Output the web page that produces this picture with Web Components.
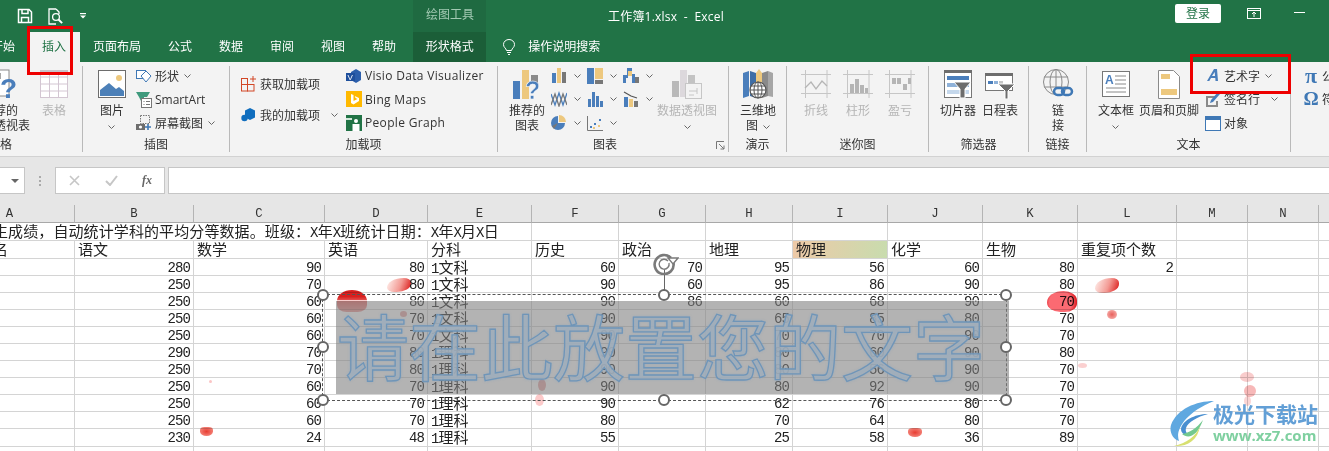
<!DOCTYPE html>
<html lang="zh">
<head>
<meta charset="utf-8">
<title>工作簿1.xlsx - Excel</title>
<style>
  html, body { margin: 0; width: 1329px; height: 451px; overflow: hidden; background: #fff; }
  body { font: 12px "Open Sans", "Noto Sans CJK SC", sans-serif; color: #333; }
  svg { display: block; }
</style>
</head>
<body>

<x-titlebar>
  <svg slot="qat" style="margin-left:17px" width="16" height="16" fill="none" stroke="#fff" stroke-width="1.5"><path d="M1.5 1.5h10.5l2.5 2.5v10.5h-13z"/><path d="M5 1.5v4h6v-4M4.5 14.5v-5h7v5"/></svg>
  <svg slot="qat" style="margin-left:14px" width="16" height="17" fill="none" stroke="#fff" stroke-width="1.3"><path d="M9 1h-7v15h7M9 1l3 3v2"/><circle cx="9" cy="9" r="3.4"/><path d="M11.5 11.5l3.6 3.6" stroke-width="2"/></svg>
  <svg slot="qat" style="margin-left:17px" width="6" height="6" fill="#fff"><rect width="6" height="1.2"/><path d="M0 2.6h6l-3 3z"/></svg>
</x-titlebar>
<x-tabs></x-tabs>

<x-ribbon>
  <x-group label="表格" style="width:165px">
    <x-big style="width:62px;margin-left:51px">
      <svg slot="icon" width="32" height="32" fill="none"><rect x="1" y="2" width="24" height="26" fill="#fff" stroke="#8a8a8a"/><rect x="3" y="5" width="14" height="6" fill="#a6a6a6"/><text x="16" y="30" font-size="28" font-weight="700" fill="#4a7ebb" font-family="Liberation Sans">?</text></svg>
      推荐的<br>数据透视表
    </x-big>
    <x-big disabled style="width:40px;margin-left:3px">
      <svg slot="icon" width="28" height="28" fill="#fff" stroke="#d3c6d2"><rect x=".5" y=".5" width="27" height="27"/><path d="M.5 7h27M.5 14h27M.5 21h27M9.5 0v28M18.5 0v28"/><rect x="0" y="0" width="28" height="4" fill="#c9c1c8" stroke="none"/></svg>
      表格
    </x-big>
  </x-group>

  <x-group label="插图" style="width:147px;padding-left:11px">
    <x-big style="width:36px">
      <svg slot="icon" width="28" height="28"><rect x=".5" y=".5" width="27" height="27" fill="#fff" stroke="#6d6d6d"/><circle cx="21" cy="8" r="3" fill="#edc87e"/><path d="M2 26v-6l9-7 7 6 3-2 5 4v5z" fill="#4c80b8"/></svg>
      图片<br><x-chev style="margin:0"></x-chev>
    </x-big>
    <x-col style="margin-left:6px">
      <x-small><svg slot="icon" width="16" height="15" fill="#fff" stroke="#3f78b5"><rect x=".5" y="2.5" width="9" height="8"/><path d="M10 3l5 5-5 6-5-6z"/></svg>形状<x-chev></x-chev></x-small>
      <x-small><svg slot="icon" width="16" height="17"><path d="M0 1h14l-3 5H3z" fill="#3f9a7d"/><path d="M3 6h5v4H5z" fill="#3f9a7d"/><rect x="5.500" y="7.500" width="10" height="9" fill="#fff" stroke="#777"/><path d="M7.500 10.500h1M7.500 13.500h1M10 10.500h4M10 13.500h4" stroke="#777"/></svg>SmartArt</x-small>
      <x-small><svg slot="icon" width="16" height="16"><rect x="4.500" y=".5" width="9" height="8" fill="none" stroke="#777" stroke-dasharray="1.500 1"/><rect x="0" y="9" width="9" height="6" fill="#6d6d6d"/><circle cx="4.500" cy="12" r="1.600" fill="#fff"/><path d="M12 9v6M9 12h6" stroke="#3f78b5" stroke-width="1.600"/></svg>屏幕截图<x-chev></x-chev></x-small>
    </x-col>
  </x-group>

  <x-group label="加载项" style="width:268px;padding-left:11px">
    <x-col style="width:105px;--row:31px;margin-top:2.500px">
      <x-small><svg slot="icon" width="16" height="16" fill="none" stroke="#d24726"><rect x=".5" y="2.500" width="6" height="6"/><rect x="6.500" y="8.500" width="6.500" height="6.500"/><rect x=".5" y="8.500" width="6" height="6.500"/><path d="M12 0v6M9 3h6"/></svg>获取加载项</x-small>
      <x-small><svg slot="icon" width="16" height="16"><path d="M9 1l5 2.500v7L9 13l-5-2.500v-7z" fill="#106ebe"/><circle cx="3.500" cy="11" r="3.200" fill="#106ebe"/></svg>我的加载项<x-chev style="margin-left:11px"></x-chev></x-small>
    </x-col>
    <x-col style="letter-spacing:.32px">
      <x-small><svg slot="icon" width="16" height="16"><path d="M10 1l5 3v8l-5 3-5-3V4z" fill="#2b5eab"/><rect x="0" y="5" width="9" height="8" fill="#1e4f9c"/><text x="1.500" y="12" font-size="8" fill="#fff" font-family="Liberation Sans">V</text></svg>Visio Data Visualizer</x-small>
      <x-small><svg slot="icon" width="16" height="16"><rect width="16" height="16" fill="#ffb900"/><path d="M5 3l2.500 1v6l4-2-2-1-.8-2 4.300 2v3l-5.500 3.500L5 12z" fill="#fff"/></svg>Bing Maps</x-small>
      <x-small><svg slot="icon" width="16" height="16"><rect width="16" height="16" fill="#217346"/><rect x="0" y="3" width="6" height="2" fill="#cfe6d8"/><circle cx="10" cy="6" r="2" fill="#fff"/><path d="M6.500 9h7v7h-7z" fill="#fff"/></svg>People Graph</x-small>
    </x-col>
  </x-group>

  <x-group label="图表" style="width:231px;padding-left:9px">
    <x-big style="width:40px">
      <svg slot="icon" width="30" height="30"><rect x="1" y="12" width="7" height="18" fill="#4a7ebb"/><rect x="10" y="1" width="7" height="29" fill="#edc87e"/><rect x="19" y="6" width="7" height="8" fill="#8a8a8a"/><text x="13" y="30" font-size="25" font-weight="700" fill="#4a7ebb" stroke="#fff" stroke-width=".5" font-family="Liberation Sans">?</text></svg>
      推荐的<br>图表
    </x-big>
    <x-col style="width:36px;margin-left:4px">
      <x-small><svg slot="icon" width="16" height="15"><rect x="1" y="5" width="4" height="10" fill="#4a7ebb"/><rect x="6" y="0" width="4" height="15" fill="#edc87e"/><rect x="11" y="4" width="4" height="11" fill="#777"/></svg><x-chev style="margin-left:4px"></x-chev></x-small>
      <x-small><svg slot="icon" width="16" height="16" fill="none" stroke-width="1.300"><path d="M0 3l4 11 4-12 4 12 4-12" stroke="#4a7ebb"/><path d="M0 14l4-11 4 12 4-12 4 11" stroke="#777"/></svg><x-chev style="margin-left:4px"></x-chev></x-small>
      <x-small><svg slot="icon" width="16" height="16"><path d="M7 1a7 7 0 1 0 7 7H7z" fill="#4a7ebb"/><path d="M8 0a7 7 0 0 1 7 7H8z" fill="#edc87e"/><path d="M7 8l-6 3 2 3z" fill="#777"/></svg><x-chev style="margin-left:4px"></x-chev></x-small>
    </x-col>
    <x-col style="width:36px">
      <x-small><svg slot="icon" width="16" height="16"><rect width="7" height="16" fill="#4a7ebb"/><rect x="8" width="8" height="11" fill="#edc87e"/><rect x="8" y="12" width="8" height="4" fill="#777"/></svg><x-chev style="margin-left:4px"></x-chev></x-small>
      <x-small><svg slot="icon" width="16" height="15" fill="#4a7ebb"><rect x="1" y="7" width="3" height="8"/><rect x="5" y="0" width="3" height="15"/><rect x="9" y="4" width="3" height="11"/><rect x="13" y="9" width="3" height="6"/></svg><x-chev style="margin-left:4px"></x-chev></x-small>
      <x-small><svg slot="icon" width="16" height="16"><path d="M.5 1v14.500H16" fill="none" stroke="#777"/><g fill="#4a7ebb"><rect x="3" y="11" width="2" height="2"/><rect x="7" y="8" width="2" height="2"/><rect x="12" y="4" width="2" height="2"/></g><g fill="#edc87e"><rect x="6" y="12" width="2" height="2"/><rect x="11" y="10" width="2" height="2"/></g></svg><x-chev style="margin-left:4px"></x-chev></x-small>
    </x-col>
    <x-col style="width:35px">
      <x-small><svg slot="icon" width="16" height="15"><path d="M0 15V7h4V0h5v6h3v9h-3V8H6V3H5v7H3v5z" fill="#4a7ebb"/><path d="M5 3h4v5H5z" fill="#edc87e"/><rect x="12" y="9" width="4" height="6" fill="#777"/></svg><x-chev style="margin-left:4px"></x-chev></x-small>
      <x-small><svg slot="icon" width="16" height="16"><rect x="1" y="6" width="4" height="10" fill="#4a7ebb"/><rect x="6" y="8" width="4" height="8" fill="#edc87e"/><rect x="11" y="10" width="4" height="6" fill="#777"/><path d="M1 1l7 4 6 2" fill="none" stroke="#555" stroke-width="1.200"/></svg><x-chev style="margin-left:4px"></x-chev></x-small>
    </x-col>
    <x-big disabled style="width:60px;margin-left:-1px">
      <svg slot="icon" width="32" height="30"><rect x="1" y="12" width="7" height="16" fill="#b9b9b9"/><rect x="9" y="1" width="7" height="27" fill="#dcd8dc"/><rect x="17" y="6" width="7" height="8" fill="#c3c3c3"/><rect x="14.500" y="14.500" width="16" height="15" fill="#f3f3f3" stroke="#c6c6c6"/><path d="M18 22h8M26 19v6M18 26h5" fill="none" stroke="#c6c6c6"/></svg>
      数据透视图<br><x-chev style="margin:0"></x-chev>
    </x-big>
    <svg slot="launcher" width="9" height="9" fill="none" stroke="#777"><path d="M.5 8V.5H8"/><path d="M3 3l5 5M8 4.500V8H4.500"/></svg>
  </x-group>

  <x-group label="演示" style="width:58px;padding-left:9px">
    <x-big style="width:40px">
      <svg slot="icon" width="30" height="30"><path d="M0 4l6-2v25l-6 2z" fill="#4a7ebb"/><path d="M7 2l6 2v25l-6-2z" fill="#3f6ea6"/><path d="M13 4l3-4 3 4v25h-6z" fill="#edc87e"/><path d="M19 4l6-2v25l-6 2z" fill="#8a8a8a"/><path d="M25 2l5 2v24l-5-1z" fill="#a6a6a6"/><circle cx="15" cy="21" r="8" fill="#fff" stroke="#555" stroke-width="1.200"/><path d="M7 21h16M8 17h14M8 25h14M15 13v16" stroke="#555" fill="none"/><ellipse cx="15" cy="21" rx="4" ry="8" fill="none" stroke="#555"/></svg>
      三维地<br>图<x-chev></x-chev>
    </x-big>
  </x-group>

  <x-group label="迷你图" style="width:142px;padding-left:8px">
    <x-big disabled style="width:42px">
      <svg slot="icon" width="30" height="28" fill="none" stroke="#c6c6c6"><path d="M0 4.500h30M0 23.500h30M4.500 0v28M26 0v28"/><path d="M4 18l6-6 5 7 6-8 5 5" stroke="#b5b5b5" stroke-width="1.300"/></svg>
      折线
    </x-big>
    <x-big disabled style="width:42px">
      <svg slot="icon" width="30" height="28"><path d="M0 4.500h30M0 23.500h30M4.500 0v28M26 0v28" stroke="#c6c6c6" fill="none"/><g fill="#b5b5b5"><rect x="7" y="14" width="4" height="9"/><rect x="12" y="9" width="4" height="14"/><rect x="17" y="15" width="4" height="8"/><rect x="22" y="18" width="3" height="5"/></g></svg>
      柱形
    </x-big>
    <x-big disabled style="width:42px">
      <svg slot="icon" width="30" height="28"><path d="M0 4.500h30M0 23.500h30M4.500 0v28M26 0v28" stroke="#c6c6c6" fill="none"/><g fill="#b5b5b5"><rect x="7" y="8" width="4" height="6"/><rect x="12" y="8" width="4" height="6"/><rect x="18" y="14" width="4" height="6"/><rect x="23" y="8" width="3" height="6"/></g></svg>
      盈亏
    </x-big>
  </x-group>

  <x-group label="筛选器" style="width:100px;padding-left:10px">
    <x-big style="width:38px">
      <svg slot="icon" width="28" height="28"><rect x=".5" y=".5" width="27" height="27" fill="#fff" stroke="#777"/><rect x="0" y="0" width="28" height="3" fill="#6d6d6d"/><rect x="3" y="6" width="22" height="4" fill="#4a7ebb"/><rect x="3" y="13" width="22" height="4" fill="#8fb2d9"/><rect x="3" y="20" width="22" height="4" fill="#c5d8ec"/><path d="M10 12h17l-6 7v9h-5v-9z" fill="#6d6d6d" stroke="#fff"/></svg>
      切片器
    </x-big>
    <x-big style="width:38px;margin-left:4px">
      <svg slot="icon" width="30" height="30"><rect x=".5" y="4.500" width="27" height="17" fill="#fff" stroke="#777"/><rect x="0" y="4" width="28" height="3" fill="#6d6d6d"/><rect x="3" y="12" width="5" height="3" fill="#4a7ebb"/><rect x="9" y="12" width="4" height="3" fill="#8fb2d9"/><rect x="14" y="12" width="4" height="3" fill="#c6c6c6"/><path d="M13 15h17l-7 7v8h-3v-8z" fill="#6d6d6d" stroke="#fff"/></svg>
      日程表
    </x-big>
  </x-group>

  <x-group label="链接" style="width:58px;padding-left:14px">
    <x-big style="width:30px">
      <svg slot="icon" width="32" height="32" fill="none" stroke="#8a8a8a"><circle cx="14" cy="14" r="12.500"/><ellipse cx="14" cy="14" rx="6" ry="12.500"/><path d="M2 9h24M2 19h24M14 1v26"/><rect x="12" y="20" width="10" height="7" rx="3.500" stroke="#3f78b5" stroke-width="2.500" fill="#f3f3f3"/><rect x="20" y="20" width="10" height="7" rx="3.500" stroke="#3f78b5" stroke-width="2.500"/></svg>
      链<br>接
    </x-big>
  </x-group>

  <x-group label="文本" style="width:204px;padding-left:10px">
    <x-big style="width:38px">
      <svg slot="icon" width="28" height="26"><rect x=".5" y=".5" width="27" height="25" fill="#fff" stroke="#777"/><text x="3" y="13" font-size="12" font-weight="700" fill="#4a7ebb" font-family="Liberation Sans">A</text><path d="M13 5h11M13 9h11M13 13h11M4 17h20M4 21h20" stroke="#8a8a8a"/></svg>
      文本框<br><x-chev style="margin:0"></x-chev>
    </x-big>
    <x-big style="width:62px;margin-left:3px">
      <svg slot="icon" width="22" height="29"><path d="M.5.5h15l6 6v22H.5z" fill="#fff" stroke="#8a8a8a"/><rect x="3" y="4" width="9" height="5" fill="#edc87e"/><rect x="3" y="19" width="16" height="6" fill="#edc87e"/></svg>
      页眉和页脚
    </x-big>
    <x-col style="margin-left:5px">
      <x-small><svg slot="icon" width="16" height="15"><path d="M2 13L9 1h3l1 12h-2.500l-.2-3H6l-1.700 3zM7 8h3l-.3-4z" fill="#4a7ebb"/></svg>艺术字<x-chev></x-chev></x-small>
      <x-small><svg slot="icon" width="16" height="16"><path d="M1 5h9v2H3v7h8v-4h2v6H1z" fill="#8a8a8a"/><path d="M5 12l1-3 7-8 2 2-7 8z" fill="#4a7ebb"/></svg>签名行<x-chev style="margin-left:11px"></x-chev></x-small>
      <x-small><svg slot="icon" width="16" height="16"><rect x=".5" y="1.500" width="15" height="14" fill="#fff" stroke="#3f78b5"/><rect y="1" width="16" height="4" fill="#3f78b5"/></svg>对象</x-small>
    </x-col>
  </x-group>

  <x-group style="width:60px;padding-left:12px;border:0">
    <x-col>
      <x-small><span slot="icon" style="color:#3f78b5;font:700 22px/20px 'Liberation Serif'">π</span>公式</x-small>
      <x-small><span slot="icon" style="color:#3f78b5;font:700 19px/20px 'Liberation Serif'">Ω</span>符号</x-small>
    </x-col>
  </x-group>
</x-ribbon>

<x-formula></x-formula>
<x-sheet></x-sheet>
<x-marks></x-marks>
<x-wordart>请在此放置您的文字</x-wordart>
<x-redbox style="left:27px;top:26px;width:40px;height:43px"></x-redbox>
<x-redbox style="left:1190px;top:54px;width:95px;height:34px"></x-redbox>
<x-watermark></x-watermark>

<script>
const UI_FONT = '"Open Sans", "Noto Sans CJK SC", sans-serif';

// small base so each element just gives its css + markup
class Shadowed extends HTMLElement {
    constructor() {
        super();
        this.attachShadow({ mode: 'open' });
    }
    connectedCallback() {
        this.shadowRoot.innerHTML = `<style>${this.css()}</style>${this.html()}`;
    }
    css() { return ''; }
    html() { return '<slot></slot>'; }
}

class XTitlebar extends Shadowed {
    css() { return `
        :host { display: flex; height: 32px; background: #217346; color: #fff; align-items: center; padding-right: 24px; font-family: ${UI_FONT}; font-size: 12px; }
        .qat { width: 413px; display: flex; align-items: center; }
        .ctx { width: 73px; height: 32px; box-sizing: border-box; padding-left: 13px; line-height: 30px; background: #1f6a41; color: #a3c9b3; }
        .title { margin-left: 122px; white-space: pre; letter-spacing: .2px; }
        .login { margin-left: auto; width: 46px; height: 19px; line-height: 19px; text-align: center; background: #fff; color: #217346; border-radius: 2px; margin-top: -5px; }
        .restore { margin-left: 26px; margin-top: -5px; }
        .min { margin-left: 33px; width: 11px; height: 1px; background: #fff; margin-top: -8px; }
    `; }
    html() { return `
        <div class="qat"><slot name="qat"></slot></div>
        <div class="ctx">绘图工具</div>
        <div class="title">工作簿1.xlsx  -  Excel</div>
        <div class="login">登录</div>
        <svg class="restore" width="14" height="11" fill="none" stroke="#fff"><rect x=".5" y=".5" width="13" height="10"/><path d="M0 2.500h14" /><path d="M7 9V4M5 6l2-2 2 2"/></svg>
        <div class="min"></div>
    `; }
}

class XTabs extends Shadowed {
    css() { return `
        :host { display: flex; height: 30px; background: #217346; color: #fff; overflow: hidden; font-family: ${UI_FONT}; font-size: 12px; line-height: 29px; }
        .wrap { display: flex; margin-left: -22.5px; }
        .tab { padding: 0 13.5px; white-space: nowrap; }
        .tab.on { background: #f3f3f3; color: #217346; }
        .tab.ctx { background: #1b5e38; margin-left: 3.5px; padding: 0 12.5px; }
        svg { display: block; margin: 7px 0 0 17px; }
        .search { margin-left: 13px; color: #fff; }
    `; }
    html() {
        const names = ['开始', '插入', '页面布局', '公式', '数据', '审阅', '视图', '帮助'];
        return `<div class="wrap">
            ${names.map(n => `<div class="tab ${n === '插入' ? 'on' : ''}">${n}</div>`).join('')}
            <div class="tab ctx">形状格式</div>
            <svg width="12" height="16" fill="none" stroke="#fff"><path d="M3.500 11.500C3 9 .5 8.500.5 5.500a5.500 5 0 0 1 11 0c0 3-2.500 3.500-3 6z"/><path d="M4 13.500h4M5 15.500h2"/></svg>
            <div class="search">操作说明搜索</div>
        </div>`;
    }
}

class XRibbon extends Shadowed {
    css() { return `
        :host { display: block; height: 90px; padding-top: 4px; background: #f3f3f3; border-bottom: 1px solid #d2d2d2; overflow: hidden; font-family: ${UI_FONT}; font-size: 12px; color: #333; }
        .row { display: flex; margin-left: -82px; width: 1600px; }
    `; }
    html() { return `<div class="row"><slot></slot></div>`; }
}

class XGroup extends Shadowed {
    css() { return `
        :host { display: flex; flex-direction: column; flex: none; height: 86px; box-sizing: border-box; border-right: 1px solid #b9b9b9; }
        .body { display: flex; flex: 1; align-items: flex-start; }
        .foot { display: flex; align-items: center; height: 14px; padding-top: 2px; line-height: 14px; margin-left: var(--foot-left, 0); }
        .label { flex: 1; text-align: center; color: #333; }
        ::slotted([slot=launcher]) { width: 9px; padding-right: 3px; margin-left: 4px; }
    `; }
    connectedCallback() {
        // footer is centred on the whole group box, not just what's after padding-left
        const pad = parseFloat(this.style.paddingLeft) || 0;
        this.style.setProperty('--foot-left', `-${pad}px`);
        super.connectedCallback();
    }
    html() { return `
        <div class="body"><slot></slot></div>
        <div class="foot"><div class="label">${this.getAttribute('label') || ''}</div><slot name="launcher"></slot></div>
    `; }
}

class XBig extends Shadowed {
    css() { return `
        :host { display: flex; flex-direction: column; align-items: center; flex: none; line-height: 15px; text-align: center; white-space: nowrap; color: #333; }
        :host([disabled]) { color: #b5b5b5; }
        .icon { height: 36px; display: flex; align-items: center; justify-content: center; margin-bottom: .5px; }
    `; }
    html() { return `<div class="icon"><slot name="icon"></slot></div><div><slot></slot></div>`; }
}

class XCol extends Shadowed {
    css() { return `:host { display: flex; flex-direction: column; flex: none; margin-top: -2px; }`; }
}

class XSmall extends Shadowed {
    css() { return `
        :host { display: flex; align-items: center; height: var(--row, 23.5px); white-space: nowrap; color: #333; }
        .icon { width: 16px; margin-right: 3px; flex: none; display: flex; align-items: center; justify-content: center; }
    `; }
    html() { return `<div class="icon"><slot name="icon"></slot></div><slot></slot>`; }
}

class XChev extends Shadowed {
    css() { return `:host { display: inline-block; margin-left: 5px; vertical-align: 1px; } svg { display: block; }`; }
    html() { return `<svg width="7" height="4" fill="none" stroke="#666"><path d="M.5.5L3.500 3.500 6.500.5"/></svg>`; }
}

class XFormula extends Shadowed {
    css() { return `
        :host { display: flex; height: 48px; box-sizing: border-box; padding-top: 10px; background: #e6e6e6; }
        .box { height: 27px; box-sizing: border-box; background: #fff; border: 1px solid #c6c6c6; display: flex; align-items: center; }
        .name { width: 25px; border-left: 0; justify-content: flex-end; padding-right: 5px; }
        .name i { border: 4px solid transparent; border-top: 4px solid #666; border-bottom: 0; }
        .dots { width: 30px; display: flex; justify-content: center; align-items: center; height: 27px; }
        .dots i { width: 2px; height: 10px; background: repeating-linear-gradient(#aaa 0 2px, transparent 2px 4px); }
        .btns { width: 110px; justify-content: space-between; padding: 0 12px 0 13px; }
        .fx { font: italic 700 12px "Liberation Serif", serif; color: #666; }
        .input { flex: 1; margin-left: 3px; border-right: 0; }
    `; }
    html() { return `
        <div class="box name"><i></i></div>
        <div class="dots"><i></i></div>
        <div class="box btns">
            <svg width="11" height="11" stroke="#c6c6c6" stroke-width="1.600" fill="none"><path d="M1 1l9 9M10 1l-9 9"/></svg>
            <svg width="13" height="11" stroke="#c6c6c6" stroke-width="2" fill="none"><path d="M1 6l4 4 7-9"/></svg>
            <span class="fx">fx</span>
        </div>
        <div class="box input"></div>
    `; }
}

const COL_W = [130, 119, 131, 103, 104, 87, 87, 87, 95, 95, 95, 99, 71, 71, 71];
const LETTERS = 'ABCDEFGHIJKLMNO';
// columns B C D E(text) F G H I J K L
const ROWS = [
    ['280', '90', '80', '文', '60', '70', '95', '56', '60', '80', '2'],
    ['250', '70', '80', '文', '90', '60', '95', '86', '90', '80', ''],
    ['250', '60', '80', '文', '90', '86', '60', '68', '90', '70', ''],
    ['250', '60', '70', '文', '90', '', '65', '85', '80', '70', ''],
    ['250', '60', '70', '文', '90', '', '70', '70', '90', '70', ''],
    ['290', '70', '80', '理', '90', '', '80', '60', '90', '80', ''],
    ['250', '70', '80', '理', '90', '', '80', '56', '90', '70', ''],
    ['250', '60', '70', '理', '90', '', '80', '92', '90', '70', ''],
    ['250', '60', '70', '理', '90', '', '62', '76', '80', '70', ''],
    ['250', '60', '70', '理', '80', '', '70', '64', '80', '70', ''],
    ['230', '24', '48', '理', '55', '', '25', '58', '36', '89', '']
];
const HEADS = ['语文', '数学', '英语', '分科', '历史', '政治', '地理', '物理', '化学', '生物', '重复项个数'];

class XSheet extends Shadowed {
    css() { return `
        :host { display: block; height: 246px; overflow: hidden; background: #fff; font-family: "Noto Sans CJK SC", sans-serif; font-size: 15px; color: #222; }
        .grid { display: grid; margin-left: -55px; width: 1500px;
            grid-template-columns: ${COL_W.map(w => w + 'px').join(' ')};
            grid-template-rows: 18px 18px 18px repeat(10, 17px) 18px 18px; }
        .c { box-sizing: border-box; border-right: 1px solid #d4d4d4; border-bottom: 1px solid #d4d4d4; padding: 0 3px; line-height: 16px; white-space: nowrap; overflow: hidden; }
        .h { background: #e6e6e6; border-right: 1px solid #b4b4b4; border-bottom: 1px solid #a8a8a8; text-align: center; font: 12.300px/18px "Liberation Mono", monospace; color: #333; }
        .n { text-align: right; padding-right: 3px; font: 14px/18px "Liberation Mono", monospace; letter-spacing: -.9px; }
        .first { padding-left: 48px; }
        .m { font: 14px "Liberation Mono", monospace; letter-spacing: -.9px; }
        .title { grid-column: span 5; letter-spacing: .1px; }
        .phys { background: linear-gradient(100deg, #eec9a7, #c8dcae); }
    `; }
    html() {
        const X = '<span class="m">X</span>';
        let h = '<div class="grid">';
        for (const l of LETTERS) h += `<div class="c h">${l}</div>`;
        h += `<div class="c title first">生成绩，自动统计学科的平均分等数据。班级：${X}年${X}班统计日期：${X}年${X}月${X}日</div>`;
        for (let i = 5; i < COL_W.length; i++) h += '<div class="c"></div>';
        h += '<div class="c first">名</div>';
        HEADS.forEach(t => { h += `<div class="c ${t === '物理' ? 'phys' : ''}">${t}</div>`; });
        for (let i = 12; i < COL_W.length; i++) h += '<div class="c"></div>';
        for (const r of ROWS) {
            h += '<div class="c"></div>';
            r.forEach((v, i) => {
                if (i === 3) h += `<div class="c"><span class="m">1</span>${v}科</div>`;
                else h += `<div class="c n">${v}</div>`;
            });
            for (let i = 12; i < COL_W.length; i++) h += '<div class="c"></div>';
        }
        for (let i = 0; i < COL_W.length; i++) h += '<div class="c"></div>';
        return h + '</div>';
    }
}

// paint smudges lying over the sheet: x, y, w, h, background, radius
const SPLATS = [
    [337, 290, 30, 22, 'linear-gradient(#d8201f 0 30%, #e96a68 55%, #ee9a98)', '55% 55% 35% 35%'],
    [387, 278, 24, 14, 'linear-gradient(110deg, #fde4e0 10%, #f39a94 55%, #df2f2d 90%)', '70% 30% 60% 30%'],
    [1047, 291, 30, 21, 'radial-gradient(circle at 45% 55%, #fb6a72 0 55%, #dc1f24 80%)', '60% 50% 45% 50%'],
    [1095, 278, 24, 15, 'linear-gradient(110deg, #fde4e0 10%, #f39a94 55%, #df2f2d 90%)', '70% 30% 60% 30%'],
    [1107, 310, 10, 9, 'radial-gradient(#e8605c, #f9c0bc)', '50%'],
    [200, 427, 13, 9, 'radial-gradient(#e83d32, #f79a90)', '40% 40% 60% 60%'],
    [908, 428, 14, 9, 'radial-gradient(#e83d32, #f79a90)', '40% 40% 60% 60%'],
    [1078, 363, 9, 5, '#fbd0d0', '50%'],
    [1240, 372, 14, 10, '#f9cccc', '50%'],
    [1244, 385, 12, 12, '#f7b8b8', '50%'],
    [1244, 396, 7, 10, '#fbd5d5', '50%'],
    [538, 379, 8, 12, '#e8a8a8', '50%'],
    [535, 394, 9, 12, '#fccaca', '50%'],
    [209, 380, 3, 3, '#fbc5c5', '50%'],
    [400, 311, 7, 6, '#e8a8a8', '50%']
];

class XMarks extends Shadowed {
    css() { return `
        :host { display: block; }
        i { position: absolute; mix-blend-mode: multiply; filter: blur(.7px); }
    `; }
    html() {
        return SPLATS.map(([x, y, w, h, bg, r]) =>
            `<i style="left:${x}px;top:${y}px;width:${w}px;height:${h}px;background:${bg};border-radius:${r}"></i>`
        ).join('');
    }
}

class XWordart extends Shadowed {
    css() { return `
        :host { position: absolute; left: 323px; top: 295px; width: 683px; height: 105px; box-sizing: border-box; outline: 1px dashed #555; }
        .plate { position: absolute; left: 13px; top: 6px; width: 673px; height: 93px; background: rgba(128,128,128,.6); box-shadow: 0 -1px 0 rgba(255,255,255,.7); }
        .text { position: absolute; left: 14px; top: 5px; white-space: nowrap; font: 400 72px/88px "Noto Sans CJK SC", sans-serif; color: rgba(172,178,184,.7); -webkit-text-stroke: 1.300px #6f95b8; text-shadow: 0 0 3px rgba(110,155,200,.7); }
        .hd { position: absolute; width: 8px; height: 8px; margin: -6px 0 0 -6px; border: 2px solid #666; border-radius: 50%; background: #fff; }
        .stem { position: absolute; left: 341px; top: -25px; width: 1px; height: 25px; background: #666; }
        .rot { position: absolute; left: 329px; top: -44px; }
    `; }
    html() {
        const pts = [[0, 0], [341, 0], [683, 0], [0, 52], [683, 52], [0, 105], [341, 105], [683, 105]];
        return `
            <div class="stem"></div>
            <div class="plate"></div>
            <div class="text"><slot></slot></div>
            <svg class="rot" width="27" height="24" fill="none" stroke="#7a7a7a"><path d="M19 7A9.500 9.500 0 1 0 21.500 12" stroke-width="2.600"/><path d="M16 10a5 5 0 1 0 1 2" stroke-width="1.400"/><path d="M16 7h10l-5 6z" fill="#fff" stroke-width="1.400"/></svg>
            ${pts.map(([x, y]) => `<div class="hd" style="left:${x}px;top:${y}px"></div>`).join('')}
        `;
    }
}

class XRedbox extends Shadowed {
    css() { return `:host { position: absolute; border: 3px solid #ee0000; }`; }
    html() { return ''; }
}

class XWatermark extends Shadowed {
    css() { return `
        :host { position: absolute; left: 1170px; top: 401px; display: flex; align-items: flex-start; }
        .txt { margin-left: -2px; }
        .cn { font: 700 21px/24px "Noto Sans CJK SC", sans-serif; color: #629fd6; white-space: nowrap; }
        .en { font: 700 15px/18px "Open Sans", sans-serif; color: #7fd0a0; white-space: nowrap; margin-top: 1px; }
    `; }
    html() { return `
        <svg width="45" height="46">
            <path d="M44 0C26 0 7 8 1 24c-2 7 2 14 8 16C5 30 14 12 44 0z" fill="#5fa8e0"/>
            <path d="M38 13C24 13 12 20 11 28c0 5 5 7 10 6-4-1-6-3-5-7 2-6 11-11 22-14z" fill="#4a8fd0"/>
            <path d="M33 19c-6 8-14 13-21 14 6 5 15 3 21-14z" fill="#73c98f"/>
            <path d="M30 25C26 36 16 42 4 45c12 1 24-5 26-20z" fill="#d8e070"/>
        </svg>
        <div class="txt"><div class="cn">极光下载站</div><div class="en">www.xz7.com</div></div>
    `; }
}

customElements.define('x-titlebar', XTitlebar);
customElements.define('x-tabs', XTabs);
customElements.define('x-ribbon', XRibbon);
customElements.define('x-group', XGroup);
customElements.define('x-big', XBig);
customElements.define('x-col', XCol);
customElements.define('x-small', XSmall);
customElements.define('x-chev', XChev);
customElements.define('x-formula', XFormula);
customElements.define('x-sheet', XSheet);
customElements.define('x-marks', XMarks);
customElements.define('x-wordart', XWordart);
customElements.define('x-redbox', XRedbox);
customElements.define('x-watermark', XWatermark);
</script>
</body>
</html>
